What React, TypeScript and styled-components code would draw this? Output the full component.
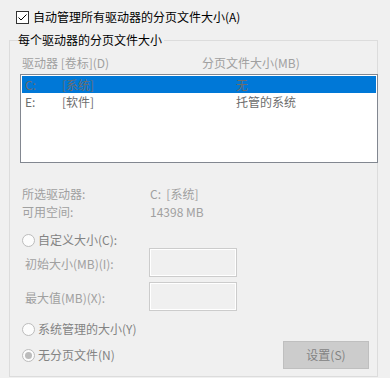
import React from 'react';
import styled, {createGlobalStyle} from 'styled-components';

const GlobalStyle = createGlobalStyle`
  html, body {
    margin: 0;
    padding: 0;
    background: #f0f0f0;
  }
  body {
    font-family: "Noto Sans CJK SC", "Microsoft YaHei", sans-serif;
    font-size: 12px;
    line-height: 16px;
    color: #000000;
  }
`;

const Page = styled.div`
  width: 390px;
  height: 378px;
  overflow: hidden;
  background: #f0f0f0;
`;

const CheckRow = styled.label`
  display: flex;
  align-items: center;
  gap: 4px;
  height: 16px;
  padding: 9px 0 0 16px;
`;

const CheckBox = styled.span`
  display: inline-flex;
  box-sizing: border-box;
  width: 13px;
  height: 13px;
  border: 1px solid #333333;
  background: #ffffff;
`;

const GroupBox = styled.fieldset`
  box-sizing: border-box;
  width: 369px;
  margin: 7px 0 0 9px;
  padding: 0 0 7px 8px;
  border: 1px solid #dcdcdc;
  min-width: 0;
`;

const GroupTitle = styled.legend`
  padding: 0 2px 0 0;
  line-height: 16px;
  color: #000000;
`;

const Body = styled.div`
  margin-left: 2px;
`;

const HeaderRow = styled.div`
  display: grid;
  grid-template-columns: 180px 1fr;
  padding-left: 2px;
  margin-top: 7px;
  height: 16px;
  color: #a0a0a0;
`;

const ListBox = styled.div`
  box-sizing: border-box;
  margin-top: 3px;
  width: 358px;
  height: 89px;
  padding: 1px;
  border: 1px solid #828790;
  background: #ffffff;
`;

const ListRow = styled.div<{ selected?: boolean }>`
  display: grid;
  grid-template-columns: 37px 174px 1fr;
  height: 17px;
  line-height: 17px;
  padding-left: 3px;
  color: #6d6d6d;
  background: ${p => (p.selected ? '#0078d7' : 'transparent')};
`;

const InfoGrid = styled.div`
  display: grid;
  grid-template-columns: 128px 1fr;
  grid-auto-rows: 18px;
  align-items: center;
  margin-top: 22px;
  padding-left: 2px;
  color: #a0a0a0;
`;

const RadioRow = styled.div<{ top: number }>`
  display: flex;
  align-items: center;
  gap: 3px;
  height: 16px;
  margin-top: ${p => p.top}px;
  padding-left: 2px;
  color: #838383;
`;

const RadioCircle = styled.span<{ checked?: boolean }>`
  display: inline-flex;
  align-items: center;
  justify-content: center;
  box-sizing: border-box;
  width: 13px;
  height: 13px;
  border-radius: 50%;
  border: 1px solid #bcbcbc;
  background: #fcfcfc;

  &::after {
    content: '';
    display: ${p => (p.checked ? 'block' : 'none')};
    width: 7px;
    height: 7px;
    border-radius: 50%;
    background: #bcbcbc;
  }
`;

const SizeRow = styled.div<{ top: number }>`
  display: grid;
  grid-template-columns: 124px 88px;
  align-items: center;
  margin-top: ${p => p.top}px;
  padding-left: 5px;
  color: #a0a0a0;
`;

const SizeLabel = styled.span`
  padding-top: 2px;
`;

const SizeInput = styled.div`
  box-sizing: border-box;
  height: 29px;
  border: 1px solid #cccccc;
  box-shadow: inset 0 0 0 1px #ffffff;
  background: #f0f0f0;
`;

const BottomRow = styled.div`
  display: flex;
  align-items: center;
  justify-content: space-between;
  margin-top: 4px;
  padding-right: 8px;
`;

const Button = styled.button`
  box-sizing: border-box;
  width: 86px;
  height: 28px;
  border: 1px solid #bfbfbf;
  background: #cccccc;
  color: #838383;
  font: inherit;
  padding: 0;
`;

function CheckMark() {
    return (
        <svg width="11" height="11" viewBox="0 0 11 11">
            <path d="M1.5 5.5 L4 8 L9.5 2.5" fill="none" stroke="#000000" strokeWidth="1"/>
        </svg>
    );
}

interface RadioProps {
    label: string,
    top: number,
    checked?: boolean,
}

function Radio(props: RadioProps) {
    return (
        <RadioRow top={props.top}>
            <RadioCircle checked={props.checked}/>
            <span>{props.label}</span>
        </RadioRow>
    );
}

const drives = [
    {letter: 'C:', label: '[系统]', size: '无', selected: true},
    {letter: 'E:', label: '[软件]', size: '托管的系统', selected: false},
];

export default function App() {
    return (
        <Page>
            <GlobalStyle/>
            <CheckRow>
                <CheckBox><CheckMark/></CheckBox>
                <span>自动管理所有驱动器的分页文件大小(A)</span>
            </CheckRow>
            <GroupBox>
                <GroupTitle>每个驱动器的分页文件大小</GroupTitle>
                <Body>
                    <HeaderRow>
                        <span>驱动器 [卷标](D)</span>
                        <span>分页文件大小(MB)</span>
                    </HeaderRow>
                    <ListBox>
                        {drives.map(d => (
                            <ListRow key={d.letter} selected={d.selected}>
                                <span>{d.letter}</span>
                                <span>{d.label}</span>
                                <span>{d.size}</span>
                            </ListRow>
                        ))}
                    </ListBox>
                    <InfoGrid>
                        <span>所选驱动器:</span>
                        <span>C:&nbsp; [系统]</span>
                        <span>可用空间:</span>
                        <span>14398 MB</span>
                    </InfoGrid>
                    <Radio label="自定义大小(C):" top={11}/>
                    <SizeRow top={0}>
                        <SizeLabel>初始大小(MB)(I):</SizeLabel>
                        <SizeInput/>
                    </SizeRow>
                    <SizeRow top={5}>
                        <SizeLabel>最大值(MB)(X):</SizeLabel>
                        <SizeInput/>
                    </SizeRow>
                    <Radio label="系统管理的大小(Y)" top={10}/>
                    <BottomRow>
                        <Radio label="无分页文件(N)" top={0} checked/>
                        <Button disabled>设置(S)</Button>
                    </BottomRow>
                </Body>
            </GroupBox>
        </Page>
    );
}
